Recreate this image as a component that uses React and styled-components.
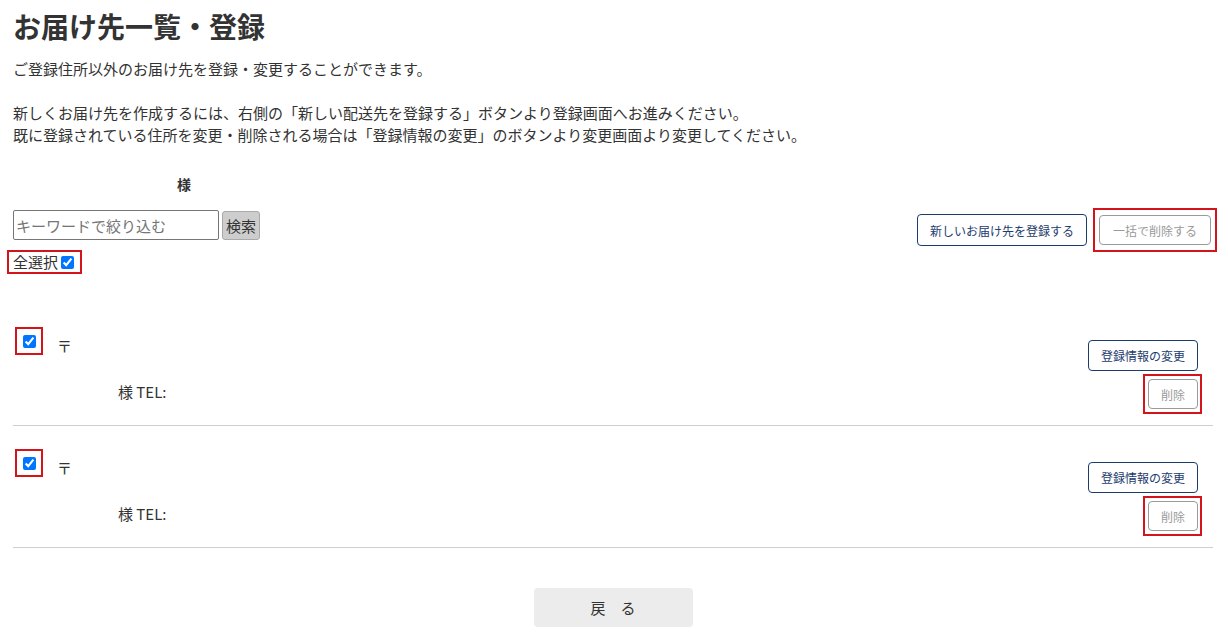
import React from "react";
import styled, { createGlobalStyle } from "styled-components";

const GlobalStyle = createGlobalStyle`
  html, body {
    margin: 0;
    background: #fff;
  }
  body {
    font-family: "Noto Sans CJK JP", "Noto Sans", sans-serif;
    color: #333;
  }
`;

const Page = styled.div`
  width: 1200px;
  padding: 6px 13px 0;
`;

const Title = styled.h1`
  margin: 0;
  font-size: 28px;
  line-height: 40px;
  font-weight: 700;
  color: #333;
`;

const Lead = styled.p`
  margin: 12px 0 0;
  font-size: 15px;
  line-height: 22px;
`;

const Name = styled.p`
  margin: 28px 0 0;
  padding-left: 164px;
  font-size: 14px;
  line-height: 20px;
  font-weight: 700;
`;

const Toolbar = styled.div`
  display: flex;
  justify-content: space-between;
  align-items: flex-start;
  margin-top: 14px;
`;

const SearchRow = styled.div`
  display: flex;
  align-items: center;
  margin-top: 2px;
`;

const SearchInput = styled.input`
  box-sizing: border-box;
  width: 206px;
  height: 30px;
  margin: 0;
  padding: 0 2px;
  border: 1px solid #767676;
  border-radius: 2px;
  font-family: inherit;
  font-size: 15px;
  color: #333;
  &::placeholder {
    color: #757575;
  }
`;

const SearchButton = styled.button`
  box-sizing: border-box;
  height: 29px;
  margin-left: 3px;
  padding: 0 3px;
  background: #cdcdcd;
  border: 1px solid #a9a9a9;
  border-radius: 3px;
  font-family: inherit;
  font-size: 15px;
  color: #333;
`;

/* red annotation frame around the bulk-delete controls */
const Mark = styled.div`
  box-sizing: border-box;
  display: ${(p) => (p.$inline ? "inline-flex" : "flex")};
  align-items: center;
  border: 2px solid #d3141b;
  padding: ${(p) => p.$pad || "4px"};
`;

const SelectAll = styled(Mark)`
  margin: 10px 0 0 -6px;
  height: 24px;
  padding: 0 6px 0 4px;
  gap: 3px;
  font-size: 15px;
  line-height: 20px;
`;

const Check = styled.input.attrs({ type: "checkbox" })`
  width: 13px;
  height: 13px;
  margin: 0;
`;

const Actions = styled.div`
  display: flex;
  align-items: center;
  gap: 6px;
  margin-right: -4px;
`;

const Btn = styled.button`
  box-sizing: border-box;
  height: ${(p) => p.$h || 30}px;
  padding: 0 ${(p) => p.$px || 12}px;
  background: #fff;
  border: 1px solid ${(p) => (p.$muted ? "#9a9a9a" : "#1d3c6e")};
  border-radius: 4px;
  font-family: inherit;
  font-size: 12px;
  color: ${(p) => (p.$muted ? "#9a9a9a" : "#1d3c6e")};
  white-space: nowrap;
`;

const List = styled.div`
  margin-top: 30px;
`;

const Row = styled.div`
  display: flex;
  justify-content: space-between;
  align-items: flex-start;
  padding: 23px 15px 11px 2px;
  border-bottom: 1px solid #cfcfcf;
`;

const RowMain = styled.div`
  display: flex;
  flex-direction: column;
`;

const CheckLine = styled.div`
  display: flex;
  align-items: flex-start;
  gap: 14px;
`;

const CheckBox = styled(Mark)`
  width: 28px;
  height: 28px;
  justify-content: center;
  padding: 0;
`;

const Zip = styled.span`
  margin-top: 8px;
  font-size: 15px;
  line-height: 22px;
`;

const Tel = styled.div`
  margin-top: 24px;
  padding-left: 103px;
  font-size: 15px;
  line-height: 22px;
`;

const RowActions = styled.div`
  display: flex;
  flex-direction: column;
  align-items: flex-end;
  margin-top: 13px;
`;

const DeleteMark = styled(Mark)`
  margin: 3px -4px 0 0;
  padding: 3px 2px 3px 3px;
`;

const BackButton = styled.button`
  display: block;
  width: 159px;
  height: 39px;
  margin: 40px auto 0;
  background: #ececec;
  border: none;
  border-radius: 4px;
  font-family: inherit;
  font-size: 15px;
  color: #333;
`;

const entries = [1, 2];

export default function App() {
  return (
    <Page>
      <GlobalStyle />
      <Title>お届け先一覧・登録</Title>
      <Lead>
        ご登録住所以外のお届け先を登録・変更することができます。
        <br />
        <br />
        新しくお届け先を作成するには、右側の「新しい配送先を登録する」ボタンより登録画面へお進みください。
        <br />
        既に登録されている住所を変更・削除される場合は「登録情報の変更」のボタンより変更画面より変更してください。
      </Lead>
      <Name>様</Name>

      <Toolbar>
        <div>
          <SearchRow>
            <SearchInput placeholder="キーワードで絞り込む" />
            <SearchButton>検索</SearchButton>
          </SearchRow>
          <SelectAll $inline>
            全選択
            <Check defaultChecked />
          </SelectAll>
        </div>
        <Actions>
          <Btn $h={32}>新しいお届け先を登録する</Btn>
          <Mark $pad="5px 4px">
            <Btn $muted $px={13}>一括で削除する</Btn>
          </Mark>
        </Actions>
      </Toolbar>

      <List>
        {entries.map((id) => (
          <Row key={id}>
            <RowMain>
              <CheckLine>
                <CheckBox>
                  <Check defaultChecked />
                </CheckBox>
                <Zip>〒</Zip>
              </CheckLine>
              <Tel>様 TEL:</Tel>
            </RowMain>
            <RowActions>
              <Btn $h={31}>登録情報の変更</Btn>
              <DeleteMark>
                <Btn $muted>削除</Btn>
              </DeleteMark>
            </RowActions>
          </Row>
        ))}
      </List>

      <BackButton>戻　る</BackButton>
    </Page>
  );
}
